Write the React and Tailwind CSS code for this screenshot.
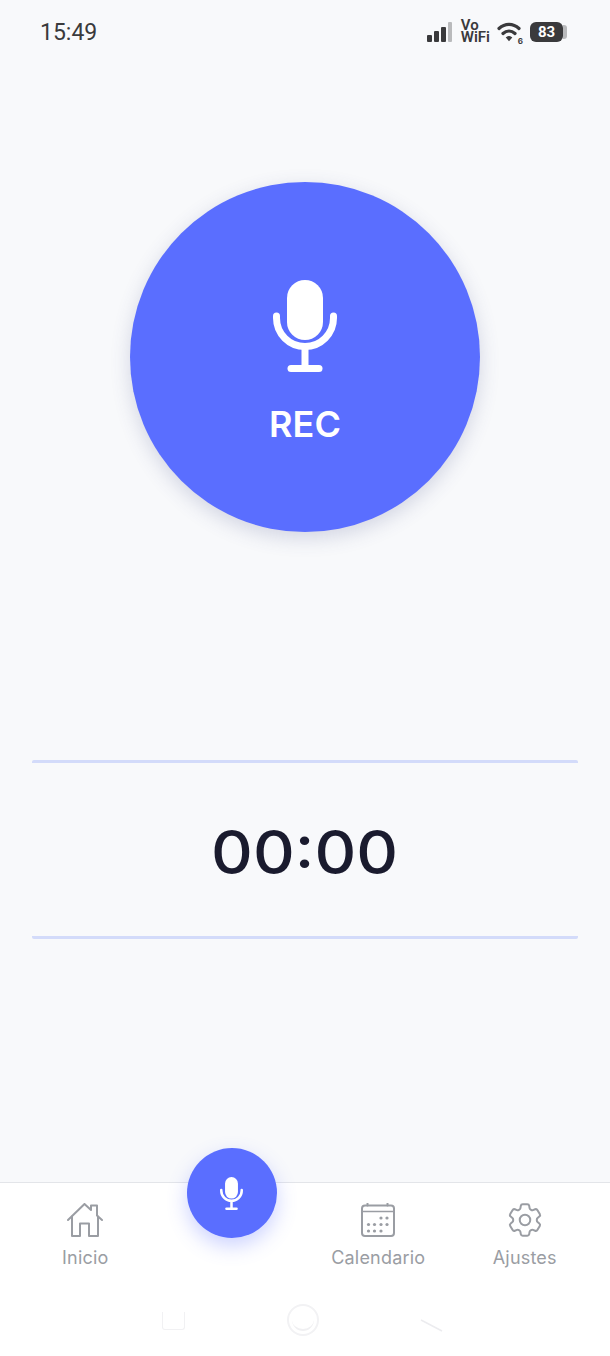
import React from "react";
import { HiOutlineCog6Tooth } from "react-icons/hi2";

const MicIcon = ({ className }) => (
  <svg viewBox="0 0 64 92" className={className} fill="none" stroke="currentColor" strokeWidth="7" strokeLinecap="round">
    <rect x="14" y="0" width="36" height="60" rx="18" fill="currentColor" stroke="none" />
    <path d="M3.5 36v2a28.5 28.5 0 0 0 57 0v-2" />
    <path d="M32 68v20" />
    <path d="M18 88.5h28" />
  </svg>
);

const HomeIcon = () => (
  <svg viewBox="0 0 36 34" className="h-[34px] w-[36px]" fill="none" stroke="currentColor" strokeWidth="2" strokeLinecap="round" strokeLinejoin="round">
    <path d="M1 17 17.5 1 24 7V2.5h6v10l5 4.5" />
    <path d="M5 13.5V33h8V20.5h9V33h9V13.5" />
  </svg>
);

const CalendarIcon = () => (
  <svg viewBox="0 0 34 34" className="h-[34px] w-[34px]" fill="none" stroke="currentColor" strokeWidth="2" strokeLinecap="round">
    <rect x="1" y="2.5" width="32" height="30.5" rx="3" />
    <path d="M1 8.5h32" strokeWidth="1.6" />
    <path d="M6.5 0.5v2M26.5 0.5v2" />
    <g fill="currentColor" stroke="none">
      <circle cx="20" cy="15" r="1.6" />
      <circle cx="26" cy="15" r="1.6" />
      <circle cx="7.5" cy="21.5" r="1.6" />
      <circle cx="13.5" cy="21.5" r="1.6" />
      <circle cx="20" cy="21.5" r="1.6" />
      <circle cx="26" cy="21.5" r="1.6" />
      <circle cx="7.5" cy="28" r="1.6" />
      <circle cx="13.5" cy="28" r="1.6" />
      <circle cx="20" cy="28" r="1.6" />
    </g>
  </svg>
);

const SignalIcon = () => (
  <svg viewBox="0 0 26 20" className="h-[20px] w-[26px]">
    <rect x="0" y="13" width="5" height="7" rx="1" fill="#3a3a3c" />
    <rect x="7" y="9" width="5" height="11" rx="1" fill="#3a3a3c" />
    <rect x="14" y="5" width="5" height="15" rx="1" fill="#3a3a3c" />
    <rect x="21" y="0" width="4" height="20" rx="1" fill="#b9babc" />
  </svg>
);

const WifiIcon = () => (
  <svg viewBox="0 0 26 20" className="h-[20px] w-[26px]" fill="none" stroke="#3a3a3c" strokeWidth="3.2" strokeLinecap="round">
    <path d="M2 6.5C8 1 16 1 22 6.5" />
    <path d="M6 11.5c3.6-3.2 8.4-3.2 12 0" />
    <path d="M9.8 15.5 12 18l2.2-2.5c-1.3-1-3.1-1-4.4 0z" fill="#3a3a3c" strokeWidth="1.5" />
  </svg>
);

const NavItem = ({ icon, label }) => (
  <div className="flex flex-col items-center pt-5 text-[#9a9da3]">
    {icon}
    <span className="mt-[10px] text-[18px] leading-[22px] tracking-[0.2px]">{label}</span>
  </div>
);

export default function App() {
  return (
    <div className="flex h-[1356px] w-[610px] flex-col overflow-hidden bg-[#f8f9fb] font-['Inter',sans-serif]">
      <header className="flex h-[64px] items-center justify-between pl-10 pr-[43px]">
        <span className="font-['Roboto',sans-serif] text-[23px] leading-none text-[#3a3a3c]">15:49</span>
        <div className="flex items-center">
          <SignalIcon />
          <span className="-mt-[3px] ml-[8px] font-['Roboto',sans-serif] text-[15px] font-semibold leading-[12px] text-[#3a3a3c]">
            Vo
            <br />
            WiFi
          </span>
          <div className="relative ml-[7px]">
            <WifiIcon />
            <span className="absolute right-0 bottom-[-3px] text-[8px] font-bold leading-none text-[#3a3a3c]">6</span>
          </div>
          <div className="ml-[7px] flex items-center">
            <div className="flex h-[20px] w-[33px] items-center justify-center rounded-[6px] bg-[#3a3a3c] font-['Roboto',sans-serif] text-[15px] font-bold text-white">83</div>
            <div className="h-[14px] w-[4px] rounded-r-[3px] bg-[#b9babc]" />
          </div>
        </div>
      </header>

      <main className="flex flex-1 flex-col items-center">
        <div className="mt-[118px] flex h-[350px] w-[350px] flex-col items-center rounded-full bg-[#5a6eff] pt-[98px] text-white shadow-[0_6px_20px_rgba(60,70,130,0.2)]">
          <MicIcon className="h-[92px] w-[64px]" />
          <span className="mt-[30px] text-[36px] font-semibold leading-[44px]">REC</span>
        </div>

        <div className="mt-[228px] flex h-[179px] w-[546px] items-center justify-center rounded-[2px] border-y-[3px] border-[#d3dbfa] pt-[5px]">
          <span className="scale-x-[1.08] text-[60px] font-medium leading-none text-[#1a1b2e]">00:00</span>
        </div>
      </main>

      <nav className="h-[174px] border-t border-[#e3e5e9] bg-white">
        <div className="grid grid-cols-4 px-3">
          <NavItem icon={<HomeIcon />} label="Inicio" />
          <div className="flex justify-center">
            <button className="-mt-[35px] flex h-[90px] w-[90px] items-center justify-center rounded-full bg-[#5a6eff] text-white shadow-[0_8px_20px_rgba(90,110,255,0.3)]">
              <MicIcon className="h-[33px] w-[23px]" />
            </button>
          </div>
          <NavItem icon={<CalendarIcon />} label="Calendario" />
          <div className="flex flex-col items-center pt-4 text-[#9a9da3]">
            <HiOutlineCog6Tooth className="h-[42px] w-[42px]" strokeWidth={1.15} />
            <span className="mt-[6px] text-[18px] leading-[22px] tracking-[0.2px]">Ajustes</span>
          </div>
        </div>
        <div className="mt-[35px] flex items-start">
          <div className="ml-[162px] mt-[8px] h-[18px] w-[23px] rounded-b-[3px] border border-t-0 border-[#f1f1f3]" />
          <div className="ml-[102px] flex h-[32px] w-[32px] items-center justify-center rounded-full border-2 border-[#f2f2f4]">
            <div className="h-[22px] w-[22px] rounded-full border-b-2 border-[#f0f0f2]" />
          </div>
          <svg viewBox="0 0 23 13" className="ml-[101px] mt-[15px] h-[13px] w-[23px]" fill="none" stroke="#ececef" strokeWidth="1.5">
            <path d="M1 1l21 11" />
          </svg>
        </div>
      </nav>
    </div>
  );
}
